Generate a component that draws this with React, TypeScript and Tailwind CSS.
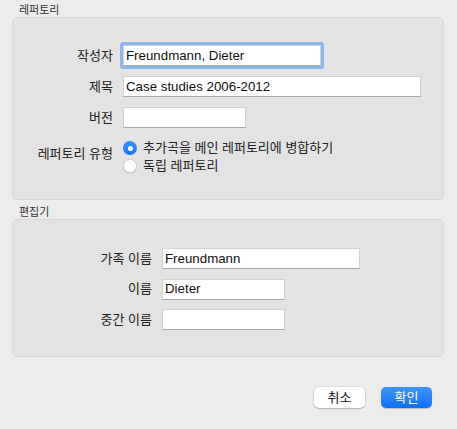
import React from 'react';

const font = { fontFamily: '"Liberation Sans", "Noto Sans CJK KR", sans-serif' };

const Field: React.FC<{ value?: string; width: string; focused?: boolean }> = ({ value = '', width, focused }) => {
    return (
        <div
            className={`${width} h-[21px] bg-white border border-[#d2d2d2] border-b-[#a8a8a8] pl-[2px] flex items-center text-[13.3px] text-[#111] leading-none ${focused ? 'shadow-[0_0_0_3px_#8cb5ee] rounded-[1px]' : ''}`}
        >
            {value}
        </div>
    );
};

const Row: React.FC<{ label: string; labelWidth: string; children: React.ReactNode }> = ({ label, labelWidth, children }) => {
    return (
        <div className="flex items-center gap-[10px]">
            <div className={`${labelWidth} text-right text-[13px] text-[#222]`}>{label}</div>
            {children}
        </div>
    );
};

const Radio: React.FC<{ checked?: boolean; label: string }> = ({ checked, label }) => {
    return (
        <div className="flex items-center gap-[6px] h-[18px]">
            {checked ? (
                <span className="w-[14px] h-[14px] rounded-full bg-gradient-to-b from-[#3b92fb] to-[#0f74f6] flex items-center justify-center">
                    <span className="w-[5px] h-[5px] rounded-full bg-white" />
                </span>
            ) : (
                <span className="w-[14px] h-[14px] rounded-full bg-white border border-[#cfcfcf] shadow-[0_0.5px_1px_rgba(0,0,0,0.15)]" />
            )}
            <span className="text-[13px] text-[#222]">{label}</span>
        </div>
    );
};

export default function App() {
    return (
        <div className="w-[457px] h-[429px] bg-[#ececec] pl-[12px] pr-[13px] overflow-hidden" style={font}>
            {/* 레퍼토리 */}
            <div className="pt-[3px] pl-[7px] text-[11px] leading-[14px] text-[#333]">레퍼토리</div>
            <div className="bg-[#e3e3e3] border border-[#d8d8d8] rounded-[5px] pt-[27px] pb-[24px]">
                <div className="flex flex-col gap-[10px]">
                    <Row label="작성자" labelWidth="w-[100px]">
                        <Field value="Freundmann, Dieter" width="w-[198px]" focused />
                    </Row>
                    <Row label="제목" labelWidth="w-[100px]">
                        <Field value="Case studies 2006-2012" width="w-[298px]" />
                    </Row>
                    <Row label="버전" labelWidth="w-[100px]">
                        <Field width="w-[123px]" />
                    </Row>
                </div>
                <div className="flex gap-[10px] mt-[11px]">
                    <div className="w-[100px] text-right text-[13px] text-[#222] pt-[5px]">레퍼토리 유형</div>
                    <div className="flex flex-col">
                        <Radio checked label="추가곡을 메인 레퍼토리에 병합하기" />
                        <Radio label="독립 레퍼토리" />
                    </div>
                </div>
            </div>

            {/* 편집기 */}
            <div className="mt-[5px] pl-[7px] text-[11px] leading-[14px] text-[#333]">편집기</div>
            <div className="bg-[#e3e3e3] border border-[#d8d8d8] rounded-[5px] pt-[28px] pb-[26px]">
                <div className="flex flex-col gap-[9.5px]">
                    <Row label="가족 이름" labelWidth="w-[139px]">
                        <Field value="Freundmann" width="w-[198px]" />
                    </Row>
                    <Row label="이름" labelWidth="w-[139px]">
                        <Field value="Dieter" width="w-[123px]" />
                    </Row>
                    <Row label="중간 이름" labelWidth="w-[139px]">
                        <Field width="w-[123px]" />
                    </Row>
                </div>
            </div>

            <div className="flex justify-end gap-[16px] mt-[30px] pr-[12px]">
                <button className="w-[51px] h-[21px] rounded-[5px] bg-white text-[13px] text-[#111] shadow-[0_0_0_0.5px_rgba(0,0,0,0.12),0_1px_1.5px_rgba(0,0,0,0.2)]">
                    취소
                </button>
                <button className="w-[51px] h-[21px] rounded-[5px] bg-gradient-to-b from-[#3d94fb] to-[#0c71f6] text-[13px] text-white shadow-[0_0.5px_1px_rgba(0,0,0,0.2)]">
                    확인
                </button>
            </div>
        </div>
    );
}
